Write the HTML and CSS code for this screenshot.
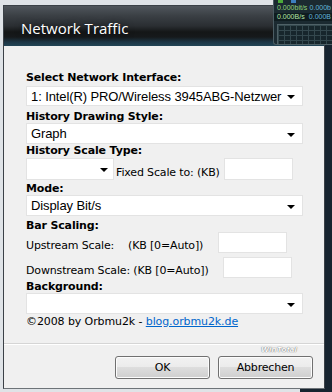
FILE: index.html
```html
<!DOCTYPE html>
<html lang="en">
<head>
    <meta charset="UTF-8">
    <title>Network Traffic</title>
    <link rel="stylesheet" href="styles.css">
</head>
<body>
    <div class="gadget">
        <div class="gadget-icons"><span class="gi green"></span><span class="gi blue"></span></div>
        <div class="gadget-row"><span class="g1">0.000bit/s</span><span class="g2">0.000b</span></div>
        <div class="gadget-row sel"><span class="g1">0.000B/s</span><span class="g2">0.000B</span></div>
        <div class="gadget-graph"></div>
    </div>

    <div class="window">
        <div class="titlebar">Network Traffic</div>
        <div class="content">
            <div class="label">Select Network Interface:</div>
            <div class="select first"><span>1: Intel(R) PRO/Wireless 3945ABG-Netzwer</span><i class="arrow"></i></div>

            <div class="label l2">History Drawing Style:</div>
            <div class="select"><span>Graph</span><i class="arrow"></i></div>

            <div class="label l3">History Scale Type:</div>
            <div class="row fixed-row">
                <div class="select small"><span></span><i class="arrow"></i></div>
                <span class="text fixed-text">Fixed Scale to: (KB)</span>
                <div class="input"></div>
            </div>

            <div class="label l4">Mode:</div>
            <div class="select"><span>Display Bit/s</span><i class="arrow"></i></div>

            <div class="label l5">Bar Scaling:</div>
            <div class="row up-row">
                <span class="text up-name">Upstream Scale:</span>
                <span class="text up-unit">(KB [0=Auto])</span>
                <div class="input"></div>
            </div>
            <div class="row down-row">
                <span class="text">Downstream Scale: (KB [0=Auto])</span>
                <div class="input"></div>
            </div>

            <div class="label l6">Background:</div>
            <div class="select"><span></span><i class="arrow"></i></div>

            <div class="copyright">&copy;2008 by Orbmu2k - <a href="#">blog.orbmu2k.de</a></div>
        </div>
        <div class="footer">
            <div class="watermark">WinTotal</div>
            <div class="buttons">
                <button class="btn">OK</button>
                <button class="btn">Abbrechen</button>
            </div>
        </div>
    </div>
</body>
</html>
```

FILE: styles.css
```css
body {
    margin: 0;
    padding: 5px 0 0 3px;
    height: 392px;
    box-sizing: border-box;
    overflow: hidden;
    background: linear-gradient(to right, #dfe3e7 0, #dfe3e7 300px, #172430 300px);
    font-family: "DejaVu Sans", Tahoma, sans-serif;
    position: relative;
}
.gadget {
    position: absolute;
    top: 0;
    right: 0;
    width: 58px;
    height: 44px;
    background: #1b2a31;
    border-left: 1px solid #4b5c63;
    border-bottom: 1px solid #4b5c63;
    border-bottom-left-radius: 3px;
    font-family: "Liberation Sans", Arial, sans-serif;
    font-size: 7px;
    z-index: 2;
}
.gadget-icons {
    height: 3px;
    display: flex;
    gap: 8px;
    padding-left: 4px;
}
.gi {
    width: 5px;
    height: 3px;
}
.gi.green { background: #4caa3a; }
.gi.blue { background: #3d7fc0; }
.gadget-row {
    display: flex;
    justify-content: space-between;
    padding: 0 1px 0 3px;
    height: 8px;
    line-height: 8px;
    margin-top: 1px;
}
.gadget-row.sel {
    background: #0f1c20;
}
.g1 { color: #8fd37a; }
.g2 { color: #63b6d8; }
.gadget-row.sel .g1 { color: #b5e6a5; }
.gadget-graph {
    margin: 3px 0 0 3px;
    height: 19px;
    border: 1px solid #4f6167;
    border-right: none;
    background-color: #17262c;
    background-image:
        linear-gradient(to right, #34484e 1px, transparent 1px),
        linear-gradient(to bottom, #34484e 1px, transparent 1px);
    background-size: 6px 5px;
}
.window {
    width: 322px;
    height: 384px;
    border: 1px solid #3b4147;
    border-bottom-color: #6d7378;
    background: #f0f0f0;
    box-sizing: border-box;
    display: flex;
    flex-direction: column;
}
.titlebar {
    height: 40px;
    flex: none;
    background: linear-gradient(to bottom, #50565c 0, #3a3f44 10px, #2a2e32 20px, #141617 26px, #16191b 31px, #1d3645 36px, #224556 40px);
    color: #fff;
    font-family: "Open Sans", "Noto Sans", sans-serif;
    font-size: 15px;
    line-height: 16px;
    padding: 14px 0 0 17px;
    box-sizing: border-box;
    text-shadow: 0 0 6px rgba(0, 0, 0, 0.6);
}
.content {
    padding: 26px 21px 0 22px;
    height: 298px;
    box-sizing: border-box;
    border-bottom: 1px solid #d5d5d5;
    flex: none;
}
.label {
    font-size: 11px;
    font-weight: bold;
    line-height: 12px;
    color: #000;
    letter-spacing: -0.15px;
}
.l2 { margin-top: 5px; }
.l3 { margin-top: 1px; }
.l4 { margin-top: 3px; }
.l5 { margin-top: 4px; }
.l6 { margin-top: 3px; }
.select {
    height: 21px;
    background: #fff;
    border: 1px solid #e3e3e3;
    box-sizing: border-box;
    display: flex;
    align-items: center;
    padding: 0 7px 0 4px;
    font-family: "Liberation Sans", Arial, sans-serif;
    font-size: 13px;
    letter-spacing: -0.1px;
    color: #000;
}
.select span {
    white-space: nowrap;
}
.select.first {
    height: 20px;
    margin-top: 2px;
}
.arrow {
    width: 0;
    height: 0;
    border-left: 4px solid transparent;
    border-right: 4px solid transparent;
    border-top: 4px solid #000;
    margin-top: 2px;
    margin-left: auto;
    flex: none;
}
.row {
    display: flex;
    align-items: flex-end;
}
.text {
    font-size: 11px;
    line-height: 12px;
    padding-bottom: 1px;
    letter-spacing: -0.15px;
    color: #000;
    white-space: nowrap;
}
.fixed-row {
    margin-top: 1px;
    height: 22px;
}
.select.small {
    width: 88px;
    height: 22px;
    padding-right: 5px;
}
.fixed-text {
    margin-left: 2px;
    width: 108px;
}
.input {
    width: 69px;
    height: 22px;
    background: #fff;
    border: 1px solid #e3e3e3;
    box-sizing: border-box;
}
.up-row {
    height: 21px;
}
.up-row .input,
.down-row .input {
    height: 21px;
}
.up-name {
    width: 102px;
}
.up-unit {
    width: 90px;
}
.down-row {
    margin-top: 4px;
    height: 21px;
}
.down-row .text {
    width: 197px;
}
.copyright {
    margin-top: 2px;
    font-size: 11px;
    line-height: 12px;
    letter-spacing: -0.1px;
    color: #000;
}
.copyright a {
    color: #0066cc;
}
.footer {
    border-top: 1px solid #fff;
    flex: 1;
    position: relative;
}
.watermark {
    position: absolute;
    right: 27px;
    top: 1px;
    font-family: "Liberation Sans", Arial, sans-serif;
    font-style: italic;
    font-weight: bold;
    font-size: 8px;
    line-height: 8px;
    color: #fff;
    text-shadow: 0 0 1px #777, 0 0 1px #777;
    letter-spacing: 0.3px;
}
.buttons {
    display: flex;
    justify-content: flex-end;
    gap: 8px;
    padding: 11px 11px 0 0;
}
.btn {
    width: 95px;
    height: 23px;
    border: 1px solid #707070;
    border-radius: 3px;
    background: linear-gradient(to bottom, #f2f2f2 0, #ebebeb 50%, #dddddd 50%, #cfcfcf 100%);
    box-shadow: inset 0 0 0 1px #fcfcfc;
    font-family: "DejaVu Sans", Tahoma, sans-serif;
    font-size: 11px;
    letter-spacing: -0.2px;
    color: #000;
    padding: 0;
}
```
